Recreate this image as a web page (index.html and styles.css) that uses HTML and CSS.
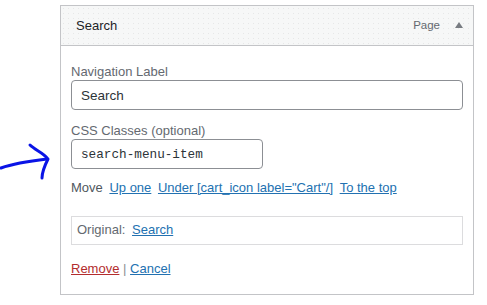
FILE: index.html
```html
<!DOCTYPE html>
<html lang="en">
<head>
    <meta charset="UTF-8">
    <meta name="viewport" content="width=device-width, initial-scale=1.0">
    <title>Menu item</title>
    <link rel="stylesheet" href="styles.css">
</head>
<body>
    <svg class="arrow" width="56" height="40" viewBox="0 0 56 40">
        <path d="M1 33 C 15 28, 30 26, 47 24" />
        <path d="M30 10 C 35 15, 44 18, 48 24 C 45 30, 42 36, 42 43" />
    </svg>
    <div class="menu-item">
        <div class="item-handle">
            <span class="item-title">Search</span>
            <span class="item-controls">
                <span class="item-type">Page</span>
                <span class="item-toggle"></span>
            </span>
        </div>
        <div class="item-settings">
            <div class="field">
                <label for="navLabel">Navigation Label</label>
                <input type="text" id="navLabel" class="wide" value="Search">
            </div>
            <div class="field">
                <label for="cssClasses">CSS Classes (optional)</label>
                <input type="text" id="cssClasses" class="code" value="search-menu-item">
            </div>
            <div class="field-move">
                Move <a href="#">Up one</a> <a href="#">Under [cart_icon label="Cart"/]</a> <a href="#">To the top</a>
            </div>
            <div class="original">
                Original: <a href="#">Search</a>
            </div>
            <div class="actions">
                <a href="#" class="remove">Remove</a> <span class="sep">|</span> <a href="#">Cancel</a>
            </div>
        </div>
    </div>
</body>
</html>
```

FILE: styles.css
```css
body {
    font-family: "Liberation Sans", Arial, sans-serif;
    font-size: 13px;
    margin: 0;
    padding: 5px 0 0 60px;
    background-color: white;
    color: #3c434a;
}
.arrow {
    position: absolute;
    left: 0;
    top: 135px;
    overflow: visible;
}
.arrow path {
    fill: none;
    stroke: #0a14e6;
    stroke-width: 3;
    stroke-linecap: round;
    stroke-linejoin: round;
}
.menu-item {
    width: 414px;
}
.item-handle {
    box-sizing: border-box;
    height: 41px;
    border: 1px solid #c3c4c7;
    background-color: #f6f7f7;
    background-image: radial-gradient(#e6e7e7 0.6px, transparent 0.8px);
    background-size: 5px 5px;
    display: flex;
    align-items: center;
    justify-content: space-between;
    padding: 0 10px 1px 15px;
}
.item-title {
    font-size: 13px;
    color: #1d2327;
}
.item-controls {
    display: flex;
    align-items: center;
}
.item-type {
    font-size: 11.5px;
    color: #646970;
}
.item-toggle {
    width: 0;
    height: 0;
    border-left: 4px solid transparent;
    border-right: 4px solid transparent;
    border-bottom: 6px solid #787c82;
    margin-left: 15px;
    margin-bottom: 0;
}
.item-settings {
    border: 1px solid #c3c4c7;
    border-top: none;
    padding: 18px 10px 17px;
}
.field {
    margin-bottom: 13px;
}
label {
    display: block;
    line-height: 16px;
    color: #646970;
}
input {
    box-sizing: border-box;
    height: 30px;
    padding: 0 9px;
    border: 1px solid #8c8f94;
    border-radius: 4px;
    color: #2c3338;
    margin: 0;
    display: block;
}
.wide {
    width: 100%;
    font-family: "Liberation Sans", Arial, sans-serif;
    font-size: 13.5px;
}
.code {
    width: 192px;
    font-family: "Liberation Mono", "Courier New", monospace;
    font-size: 12.7px;
}
a {
    color: #2271b1;
}
.field-move {
    line-height: 16px;
    color: #50575e;
    margin-top: -2px;
}
.field-move a {
    margin-left: 3px;
}
.original {
    margin-top: 20px;
    border: 1px solid #dcdcde;
    padding: 5px 5px 6px;
    line-height: 16px;
    color: #646970;
}
.original a {
    margin-left: 3px;
}
.actions {
    margin-top: 16px;
    line-height: 16px;
}
.remove {
    color: #b32d2e;
}
.sep {
    color: #8c8f94;
}
```
